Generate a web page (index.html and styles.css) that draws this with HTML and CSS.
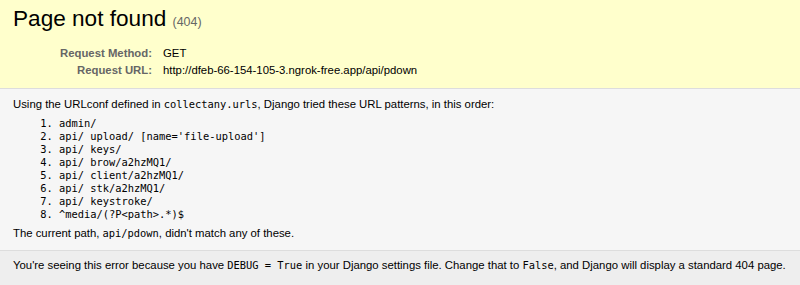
FILE: index.html
```html
<!DOCTYPE html>
<html lang="en">
<head>
    <meta charset="UTF-8">
    <meta name="viewport" content="width=device-width, initial-scale=1.0">
    <title>Page not found at /api/pdown</title>
    <link rel="stylesheet" href="styles.css">
</head>
<body>
    <div id="summary">
        <h1>Page not found <span>(404)</span></h1>
        <table class="meta">
            <tr>
                <th>Request Method:</th>
                <td>GET</td>
            </tr>
            <tr>
                <th>Request URL:</th>
                <td>http://dfeb-66-154-105-3.ngrok-free.app/api/pdown</td>
            </tr>
        </table>
    </div>
    <div id="info">
        <p>Using the URLconf defined in <code>collectany.urls</code>, Django tried these URL patterns, in this order:</p>
        <ol>
            <li>admin/</li>
            <li>api/ upload/ [name='file-upload']</li>
            <li>api/ keys/</li>
            <li>api/ brow/a2hzMQ1/</li>
            <li>api/ client/a2hzMQ1/</li>
            <li>api/ stk/a2hzMQ1/</li>
            <li>api/ keystroke/</li>
            <li>^media/(?P&lt;path&gt;.*)$</li>
        </ol>
        <p>The current path, <code>api/pdown</code>, didn't match any of these.</p>
    </div>
    <div id="explanation">
        <p>You're seeing this error because you have <code>DEBUG = True</code> in your Django settings file. Change that to <code>False</code>, and Django will display a standard 404 page.</p>
    </div>
</body>
</html>
```

FILE: styles.css
```css
html * {
    padding: 0;
    margin: 0;
}
body {
    font: 11.35px "Liberation Sans", Arial, sans-serif;
    line-height: 13px;
    background: #eee;
    color: #000;
}
body > div {
    border-bottom: 1px solid #ddd;
}
code, li {
    font-family: "DejaVu Sans Mono", monospace;
    font-size: 10.4px;
}
#summary {
    background: #ffc;
    padding: 6px 13px 9px;
}
h1 {
    font-size: 22.6px;
    line-height: 25px;
    font-weight: normal;
    margin-bottom: 10px;
}
h1 span {
    font-size: 55%;
    color: #666;
}
table {
    border: none;
    border-collapse: collapse;
    width: 100%;
}
th, td {
    vertical-align: top;
    padding: 2px 3px;
    text-align: left;
    font-weight: normal;
}
th {
    width: 136px;
    text-align: right;
    color: #666;
    font-weight: bold;
    padding-right: 8px;
}
#info {
    background: #f6f6f6;
    padding: 9px 13px 10px;
}
#info ol {
    margin: 6px 0 6px 46px;
}
#explanation {
    background: #eee;
    border-bottom: none;
    padding: 8px 13px;
}
```
